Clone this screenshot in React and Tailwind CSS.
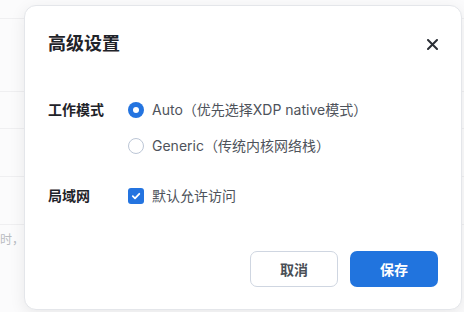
import React from 'react';

const font = { fontFamily: 'Inter, "Noto Sans CJK SC", sans-serif' };

const Radio = ({ checked }) => (
  <span
    className={
      checked
        ? 'w-4 h-4 rounded-full bg-[#2474e0] flex items-center justify-center shrink-0'
        : 'w-4 h-4 rounded-full border border-[#bcc6d6] bg-white shrink-0'
    }
  >
    {checked && <span className="w-[6px] h-[6px] rounded-full bg-white" />}
  </span>
);

const App = () => {
  return (
    <div className="w-[464px] h-[312px] relative overflow-hidden bg-[#fbfbfc] text-[14px]" style={font}>

      {/* page behind the dialog */}
      <div className="flex flex-col">
        <div className="h-[19px] border-b border-[#efeff1]" />
        <div className="h-[73px] border-b border-[#efeff1]" />
        <div className="h-[37px] border-b border-[#efeff1]" />
        <div className="h-[48px] border-b border-[#efeff1]" />
        <div className="h-[48px] border-b border-[#efeff1]" />
        <div className="pt-[6px] text-[12px] leading-[18px] text-[#b9bcc2]">时，</div>
      </div>

      {/* dialog */}
      <div className="absolute left-[24px] top-[5px] w-[438px] h-[305px] bg-white rounded-[12px] border border-[#e4e6ea] shadow-[0_4px_16px_rgba(0,0,0,0.08)] flex flex-col px-[23px]">
        <div className="flex items-center justify-between pt-[24px]">
          <h2 className="text-[18px] leading-[28px] font-semibold text-[#1f2329]">高级设置</h2>
          <button className="w-5 h-5 flex items-center justify-center -mr-[4px] text-[#2b2f36]">
            <svg width="11" height="11" viewBox="0 0 11 11" fill="none" stroke="currentColor" strokeWidth="2" strokeLinecap="round">
              <path d="M1 1L10 10M10 1L1 10" />
            </svg>
          </button>
        </div>

        <div className="flex flex-col mt-[42px]">
          <div className="flex">
            <div className="w-[80px] leading-[20px] font-semibold text-[#1f2329]">工作模式</div>
            <div className="flex flex-col gap-[16px]">
              <label className="flex items-center gap-2 leading-[20px] text-[#4e535b]">
                <Radio checked />
                Auto（优先选择XDP native模式）
              </label>
              <label className="flex items-center gap-2 leading-[20px] text-[#4e535b]">
                <Radio />
                Generic（传统内核网络栈）
              </label>
            </div>
          </div>

          <div className="flex items-center mt-[30px]">
            <div className="w-[80px] leading-[20px] font-semibold text-[#1f2329]">局域网</div>
            <label className="flex items-center gap-2 leading-[20px] text-[#4e535b]">
              <span className="w-4 h-4 rounded-[3px] bg-[#2474e0] flex items-center justify-center">
                <svg width="10" height="10" viewBox="0 0 10 10" fill="none" stroke="white" strokeWidth="1.8" strokeLinecap="round" strokeLinejoin="round">
                  <path d="M1.8 5.2L4 7.3L8.3 2.8" />
                </svg>
              </span>
              默认允许访问
            </label>
          </div>
        </div>

        <div className="flex justify-end gap-3 mt-auto mb-[22px]">
          <button className="w-[88px] h-[36px] rounded-[7px] border border-[#cfd6e1] bg-white text-[#4a4f57] font-semibold">取消</button>
          <button className="w-[88px] h-[36px] rounded-[7px] bg-[#2174de] text-white font-semibold">保存</button>
        </div>
      </div>
    </div>
  );
};

export default App;
